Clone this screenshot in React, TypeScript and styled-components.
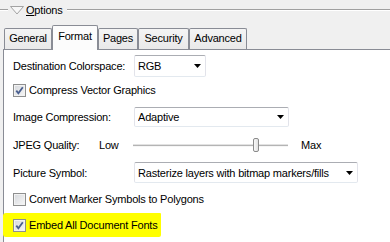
import React from "react";
import styled, { createGlobalStyle } from "styled-components";

const Global = createGlobalStyle`
  html, body { margin: 0; padding: 0; background: #f0f0f0; }
  body {
    font-family: "Liberation Sans", Arial, sans-serif;
    font-size: 11px;
    letter-spacing: -0.2px;
    color: #000;
  }
`;

const Frame = styled.div`
  width: 390px;
  height: 242px;
  overflow: hidden;
  background: #f0f0f0;
  display: flex;
  flex-direction: column;
`;

const GroupHeader = styled.div`
  height: 20px;
  flex: none;
  display: flex;
  align-items: center;
`;

const Rule = styled.div<{ $w?: number }>`
  height: 0;
  border-top: 1px solid #a0a0a0;
  border-bottom: 1px solid #ffffff;
  ${(p) => (p.$w ? `width: ${p.$w}px;` : "flex: 1;")}
`;

const Caret = styled.svg`
  width: 14px;
  height: 9px;
  margin: 0 2px 0 2px;
  flex: none;
`;

const GroupTitle = styled.span`
  margin-right: 4px;
  line-height: 13px;
`;

const AccessKey = styled.span`
  text-decoration: underline;
`;

const TabStrip = styled.div`
  height: 29px;
  flex: none;
  display: flex;
  align-items: flex-end;
  padding-left: 4px;
  position: relative;
  z-index: 1;
`;

const Tab = styled.div<{ $w: number; $active?: boolean }>`
  box-sizing: border-box;
  width: ${(p) => p.$w}px;
  height: ${(p) => (p.$active ? 25 : 21)}px;
  margin-bottom: ${(p) => (p.$active ? -1 : 0)}px;
  border: 1px solid #898c95;
  border-bottom: none;
  border-radius: 2px 2px 0 0;
  background: ${(p) =>
    p.$active
      ? "#fcfcfc"
      : "linear-gradient(#f4f4f4, #e9e9e9)"};
  display: flex;
  align-items: center;
  justify-content: center;
  padding-bottom: ${(p) => (p.$active ? 4 : 2)}px;
`;

const Panel = styled.div`
  flex: 1;
  margin-left: 3px;
  border-top: 1px solid #898c95;
  border-left: 1px solid #898c95;
  background: #ffffff;
  padding: 5px 0 0 9px;
  display: grid;
  grid-template-rows: 22px 26px 28px 28px 27px 26px 26px;
  align-items: center;
  align-content: start;
`;

const Row = styled.div`
  display: flex;
  align-items: center;
  height: 100%;
`;

const Label = styled.span<{ $w: number }>`
  width: ${(p) => p.$w}px;
  flex: none;
  white-space: nowrap;
`;

const Select = styled.div<{ $w: number; $h: number }>`
  box-sizing: border-box;
  width: ${(p) => p.$w}px;
  height: ${(p) => p.$h}px;
  border: 1px solid #e2e3ea;
  border-top-color: #abadb3;
  border-bottom-color: #e3e9ef;
  border-radius: 2px;
  background: #ffffff;
  display: flex;
  align-items: center;
  padding: 0 4px 0 3px;
  flex: none;
`;

const SelectText = styled.span`
  flex: 1;
  white-space: nowrap;
  overflow: hidden;
`;

const Arrow = styled.svg`
  width: 7px;
  height: 4px;
  flex: none;
`;

const SliderBox = styled.div<{ $w: number }>`
  position: relative;
  width: ${(p) => p.$w}px;
  height: 14px;
  flex: none;
  display: flex;
  align-items: center;
  margin-right: 13px;
`;

const Track = styled.div`
  width: 100%;
  height: 1px;
  background: #b4b4b4;
  box-shadow: 0 -1px 0 #e2e2e2, 0 1px 0 #f6f6f6;
`;

const Thumb = styled.div`
  position: absolute;
  top: 0;
  box-sizing: border-box;
  width: 6px;
  height: 14px;
  border: 1px solid #8a8a8a;
  border-radius: 2px;
  background: linear-gradient(90deg, #f8f8f8, #e2e2e2);
`;

const CheckRow = styled.label<{ $highlight?: boolean }>`
  display: flex;
  align-items: center;
  gap: 3px;
  white-space: nowrap;
  ${(p) =>
    p.$highlight
      ? `
    background: #ffff00;
    margin-left: -10px;
    padding: 0 4px 0 10px;
    height: 24px;
    width: fit-content;
    border-radius: 3px 1px 2px 3px;
  `
      : ""}
`;

const Box = styled.span`
  box-sizing: border-box;
  width: 13px;
  height: 13px;
  flex: none;
  border: 1px solid #8e8f8f;
  background: linear-gradient(135deg, #d5d8dc, #f7f7f7);
  box-shadow: inset 0 0 0 1px #f2f2f2;
  display: flex;
  align-items: center;
  justify-content: center;
`;

const Check = ({ checked }: { checked: boolean }) => (
  <Box>
    {checked && (
      <svg width="11" height="11" viewBox="0 0 11 11">
        <path
          d="M2.3 5.6 L4.4 8.3 L8.8 2.2"
          fill="none"
          stroke="#4a5f8f"
          strokeWidth="1.8"
        />
      </svg>
    )}
  </Box>
);

const DropArrow = () => (
  <Arrow viewBox="0 0 7 4">
    <polygon points="0,0 7,0 3.5,4" fill="#000" />
  </Arrow>
);

const tabs = [
  { name: "General", w: 48 },
  { name: "Format", w: 46, active: true },
  { name: "Pages", w: 40 },
  { name: "Security", w: 51 },
  { name: "Advanced", w: 58 },
];

export default function App() {
  const sliderW = 155;
  const value = 0.805;
  return (
    <>
      <Global />
      <Frame>
        <GroupHeader>
          <Rule $w={8} />
          <Caret viewBox="0 0 14 9">
            <polygon
              points="0.5,0.5 13.5,0.5 7,8"
              fill="#f7f7f7"
              stroke="#a3a3a3"
              strokeWidth="1"
            />
          </Caret>
          <GroupTitle>
            <AccessKey>O</AccessKey>ptions
          </GroupTitle>
          <Rule />
        </GroupHeader>
        <TabStrip>
          {tabs.map((t) => (
            <Tab key={t.name} $w={t.w} $active={t.active}>
              {t.name}
            </Tab>
          ))}
        </TabStrip>
        <Panel>
          <Row>
            <Label $w={121}>Destination Colorspace:</Label>
            <Select $w={72} $h={22}>
              <SelectText>RGB</SelectText>
              <DropArrow />
            </Select>
          </Row>
          <Row>
            <CheckRow>
              <Check checked />
              Compress Vector Graphics
            </CheckRow>
          </Row>
          <Row>
            <Label $w={121}>Image Compression:</Label>
            <Select $w={155} $h={20}>
              <SelectText>Adaptive</SelectText>
              <DropArrow />
            </Select>
          </Row>
          <Row>
            <Label $w={86}>JPEG Quality:</Label>
            <Label $w={34}>Low</Label>
            <SliderBox $w={sliderW}>
              <Track />
              <Thumb style={{ left: `${Math.round(value * (sliderW - 6))}px` }} />
            </SliderBox>
            <Label $w={30}>Max</Label>
          </Row>
          <Row>
            <Label $w={121}>Picture Symbol:</Label>
            <Select $w={224} $h={21}>
              <SelectText>Rasterize layers with bitmap markers/fills</SelectText>
              <DropArrow />
            </Select>
          </Row>
          <Row>
            <CheckRow>
              <Check checked={false} />
              Convert Marker Symbols to Polygons
            </CheckRow>
          </Row>
          <Row>
            <CheckRow $highlight>
              <Check checked />
              Embed All Document Fonts
            </CheckRow>
          </Row>
        </Panel>
      </Frame>
    </>
  );
}
